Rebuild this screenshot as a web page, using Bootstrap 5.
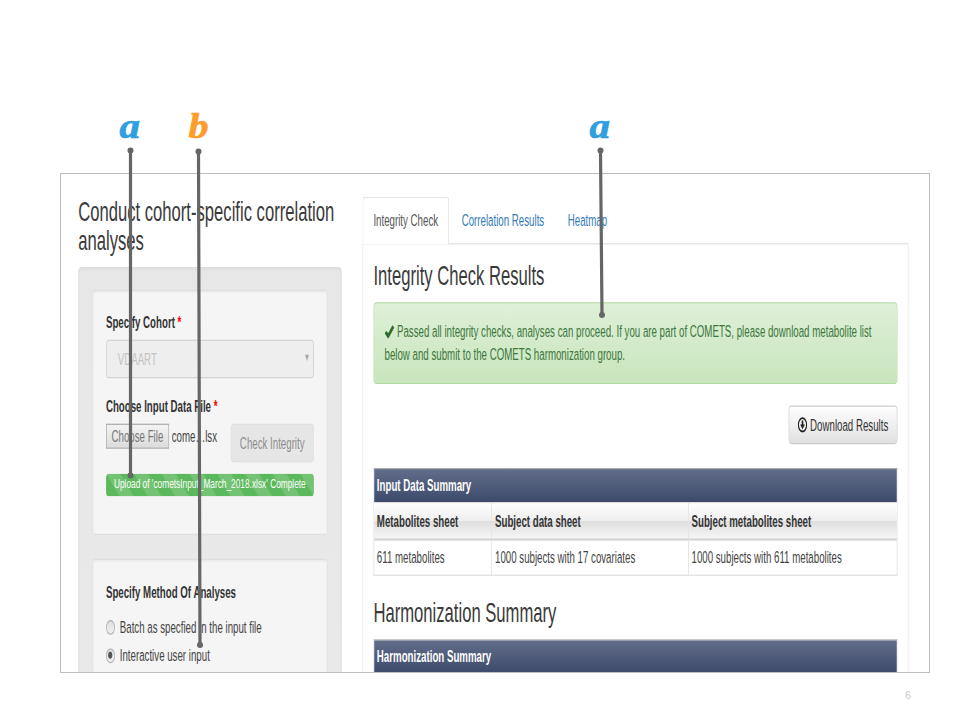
<!DOCTYPE html>
<html lang="en">
<head>
<meta charset="utf-8">
<title>COMETS integrity check</title>
<link href="https://cdn.jsdelivr.net/npm/bootstrap@5.3.0/dist/css/bootstrap.min.css" rel="stylesheet">
<style>
body{width:960px;height:720px;overflow:hidden;font-family:"Liberation Sans",Arial,sans-serif;color:#333}
.slide{width:960px;height:720px;padding:173px 30px 0 60px}
.frame{width:870px;height:500px;border:1px solid #bcbcbc}
/* the application is shown narrower and taller than its natural size */
.app{width:1252.5px;height:438.8px;transform:scale(.693,1.135);transform-origin:0 0;font-size:14px;line-height:20px;padding:20px 29.5px 0 24.8px;gap:30px;color:#444}
.side{width:380px}
.main{width:788px}
.app h3{font-size:24px;line-height:26.4px;font-weight:400;margin:0 0 10px;color:#3a3a3a}
.side h3{margin-bottom:9px!important}
.well{border:1px solid #dcdcdc;border-radius:4px;box-shadow:inset 0 1px 3px rgba(0,0,0,.06)}
.well-outer{background:linear-gradient(#e7e7e7,#eaeaea);padding:19px;height:500px}
.well-inner{background:#f5f5f5;padding:18.5px 19px;border-color:#dfdfdf}
.well-inner+.well-inner{margin-top:21px;height:300px;padding-top:19px}
.lab{font-weight:700;margin-bottom:5px;color:#333}
.lab span{color:#f00}
.sel{height:34px;border:1px solid #ccc;border-radius:4px;background:#eee;color:#c3c3c3;padding:0 6px 0 16px;margin-bottom:15px}
.sel svg{width:6px;height:6px;margin-bottom:2px}
.filebtn{height:22px;width:91px;border:1px solid #a5a5a5;background:linear-gradient(#f3f3f3,#dcdcdc);color:#777;line-height:20px;text-align:center}
.check{height:34px;width:120px;border:1px solid #ddd;border-radius:4px;background:#e6e6e6;color:#8d8d8d;font-size:14px;line-height:33px;padding:0}
.bar{height:20px;border-radius:4px;background-color:#5cb85c;background-size:40px 40px;font-size:12px;line-height:18px;padding-bottom:2px;color:#fff;margin-top:9.5px}
.radio-dot{width:13px;height:13px;border:1px solid #aaa;border-radius:50%;background:linear-gradient(#ddd,#f2f2f2);margin-right:7px}
.radio-dot i{width:6px;height:6px;border-radius:50%;background:#555}
.method{margin-bottom:10.3px}
.opt{height:20px;margin-bottom:5px}
.tabs{height:42px;border-bottom:1px solid #ddd}
.tabs a{padding:11px 16px 10px;margin-right:2px;color:#337ab7;text-decoration:none;height:42px}
.tabs a.on{color:#555;background:#fff;border:1px solid #ddd;border-bottom:0;border-radius:4px 4px 0 0;padding:10px 15px}
.pane{border:1px solid #e6e6e6;border-top:0;padding:14.6px 15px 0;height:500px}
.ok-box{height:72px;border:1px solid #b2dba1;border-radius:4px;background:linear-gradient(#dff0d8,#c8e5bc);color:#3c763d;padding:15px}
.ok-box svg{width:14px;height:14px;vertical-align:-2px;margin-right:4px}
.dl{height:34px;border:1px solid #ccc;border-radius:4px;background:linear-gradient(#fff,#e0e0e0);color:#333;font-size:14px;padding:0 12px;line-height:32px;margin:19px 0 20.5px}
.dl svg{width:14px;height:14px;margin-right:4px}
.grid{table-layout:fixed;width:756px;border-collapse:separate;border-spacing:0;border:1px solid #ddd;border-top:1px solid #aaa;margin-bottom:19.5px}
.grid th,.grid td{padding:0 4px;line-height:20px;white-space:nowrap;border-left:1px solid #ddd}
.grid tr>:first-child{border-left:0}
.grid .cap th{height:29px;color:#fff;background:linear-gradient(#616d89,#3d4a6b)}
.grid .hd th{height:34px;padding-top:2px;color:#333;border-top:1px solid #ddd;border-bottom:2px solid #d4d4d4;background:linear-gradient(#fff,#eee 50%,#dedede 51%,#f6f6f6)}
.grid td{height:30.500px;padding-top:1px}
.marks{left:0;top:0;width:960px;height:720px;pointer-events:none}
.pageno{font-size:11px;color:#c8c8c8;padding:15px 19px 0 0;line-height:15px}
</style>
</head>
<body class="bg-white m-0 position-relative">
<div class="slide">
  <div class="frame overflow-hidden">
    <div class="app d-flex align-items-start">
      <section class="side flex-shrink-0">
        <h3>Conduct cohort-specific correlation analyses</h3>
        <div class="well well-outer">
          <div class="well well-inner" style="height:216px">
            <div class="lab">Specify Cohort <span>*</span></div>
            <div class="sel d-flex align-items-center justify-content-between"><span>VDAART</span><svg viewBox="0 0 6 6"><path d="M0 0h6L3 6z" fill="#aaa"/></svg></div>
            <div class="lab">Choose Input Data File <span>*</span></div>
            <div class="d-flex align-items-start justify-content-between">
              <div class="d-flex align-items-center"><span class="filebtn">Choose File</span><span class="ms-1">come…lsx</span></div>
              <button class="check btn">Check Integrity</button>
            </div>
            <div class="bar progress-bar-striped d-flex align-items-center justify-content-center">Upload of 'cometsInput_March_2018.xlsx' Complete</div>
          </div>
          <div class="well well-inner">
            <div class="lab method">Specify Method Of Analyses</div>
            <div class="opt d-flex align-items-center"><span class="radio-dot"></span>Batch as specfied in the input file</div>
            <div class="opt d-flex align-items-center"><span class="radio-dot d-flex align-items-center justify-content-center"><i></i></span>Interactive user input</div>
          </div>
        </div>
      </section>
      <section class="main flex-shrink-0">
        <nav class="tabs d-flex"><a class="on" href="#">Integrity Check</a><a href="#">Correlation Results</a><a href="#">Heatmap</a></nav>
        <div class="pane">
          <h3>Integrity Check Results</h3>
          <div class="ok-box"><svg viewBox="0 0 14 14"><path d="M0 8.3 2.3 6l2.8 2.4L11.2 1.2 14 3.2 5.7 12.8H4.6z" fill="#2f6b31"/></svg>Passed all integrity checks, analyses can proceed. If you are part of COMETS, please download metabolite list below and submit to the COMETS harmonization group.</div>
          <div class="d-flex justify-content-end"><button class="dl btn d-flex align-items-center"><svg viewBox="0 0 14 14"><circle cx="7" cy="7" r="5.9" fill="none" stroke="#222" stroke-width="1.6"/><path d="M5.8 3.2h2.4v3.6h2.2L7 10.8 3.6 6.8h2.2z" fill="#222"/></svg>Download Results</button></div>
          <table class="grid">
            <colgroup><col style="width:169.5px"><col style="width:283.5px"><col></colgroup>
            <tr class="cap"><th colspan="3">Input Data Summary</th></tr>
            <tr class="hd"><th>Metabolites sheet</th><th>Subject data sheet</th><th>Subject metabolites sheet</th></tr>
            <tr><td>611 metabolites</td><td>1000 subjects with 17 covariates</td><td>1000 subjects with 611 metabolites</td></tr>
          </table>
          <h3>Harmonization Summary</h3>
          <table class="grid"><tr class="cap"><th>Harmonization Summary</th></tr></table>
        </div>
      </section>
    </div>
  </div>
  <div class="pageno text-end">6</div>
</div>
<svg class="marks position-absolute" viewBox="0 0 960 720">
  <g stroke="#666" stroke-width="3.2" fill="#666">
    <path d="M130.500 151V476M198.500 152 200 645M600.500 151 602 315"/>
    <g stroke="none"><circle cx="130.500" cy="150.500" r="3"/><circle cx="130.500" cy="475.500" r="3"/><circle cx="198.500" cy="151.500" r="3"/><circle cx="200" cy="645" r="3"/><circle cx="600.500" cy="150.500" r="3"/><circle cx="602" cy="315" r="3"/></g>
  </g>
  <g font-family="Liberation Serif, serif" font-weight="700" font-style="italic" font-size="35" stroke-width=".7">
    <text x="119.500" y="138" fill="#2f9fe0" stroke="#2f9fe0" textLength="20.500" lengthAdjust="spacingAndGlyphs">a</text>
    <text x="188.500" y="138" fill="#ff9d2b" stroke="#ff9d2b" textLength="20" lengthAdjust="spacingAndGlyphs">b</text>
    <text x="589.500" y="138" fill="#2f9fe0" stroke="#2f9fe0" textLength="20.500" lengthAdjust="spacingAndGlyphs">a</text>
  </g>
</svg>
<script src="https://cdn.jsdelivr.net/npm/bootstrap@5.3.0/dist/js/bootstrap.bundle.min.js"></script>
</body>
</html>
